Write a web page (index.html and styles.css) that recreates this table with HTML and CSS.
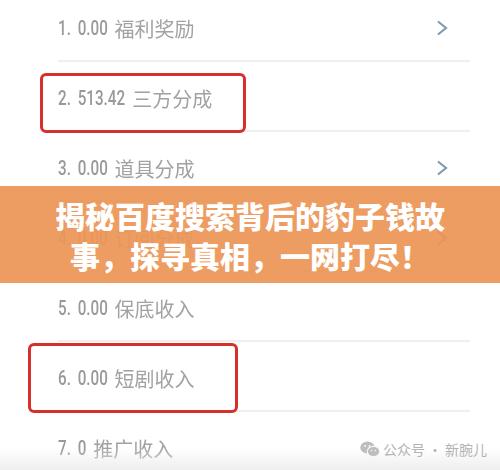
FILE: index.html
```html
<!DOCTYPE html>
<html lang="zh">
<head>
<meta charset="utf-8">
<link rel="stylesheet" href="styles.css">
</head>
<body>
<div class="page">
  <ul class="list">
    <li class="row"><span class="num n7">1. 0.00</span><span class="label">福利奖励</span>
      <svg class="chev" viewBox="0 0 12 16"><polyline points="2,1.5 10,8 2,14.5"/></svg></li>
    <li class="row"><span class="num n9">2. 513.42</span><span class="label">三方分成</span>
      <span class="mark mark-a"></span></li>
    <li class="row"><span class="num n7">3. 0.00</span><span class="label">道具分成</span>
      <svg class="chev" viewBox="0 0 12 16"><polyline points="2,1.5 10,8 2,14.5"/></svg></li>
    <li class="row"><span class="num n7">4. 0.00</span><span class="label">订阅分成</span>
      <svg class="chev" viewBox="0 0 12 16"><polyline points="2,1.5 10,8 2,14.5"/></svg></li>
    <li class="row"><span class="num n7">5. 0.00</span><span class="label">保底收入</span></li>
    <li class="row"><span class="num n7">6. 0.00</span><span class="label">短剧收入</span>
      <span class="mark mark-b"></span></li>
    <li class="row"><span class="num n4">7. 0</span><span class="label">推广收入</span></li>
  </ul>

  <div class="banner">
    <h1 class="title">揭秘百度搜索背后的豹子钱故事，探寻真相，一网打尽！</h1>
  </div>

  <div class="fade"></div>

  <div class="watermark">
    <svg class="wx" viewBox="0 0 20 16">
      <ellipse cx="7.5" cy="6.5" rx="7.2" ry="6" fill="#bdbdbd"/>
      <ellipse cx="13.5" cy="10.5" rx="6.2" ry="5.2" fill="#bdbdbd" stroke="#f6f6f6" stroke-width="1.2"/>
      <circle cx="5" cy="5" r="1" fill="#f6f6f6"/>
      <circle cx="9.6" cy="5" r="1" fill="#f6f6f6"/>
      <circle cx="11.6" cy="9.6" r="0.8" fill="#f6f6f6"/>
      <circle cx="15.4" cy="9.6" r="0.8" fill="#f6f6f6"/>
    </svg>
    <span class="wm-text">公众号<span class="wm-dot">·</span>新腕儿</span>
  </div>
</div>
</body>
</html>
```

FILE: styles.css
```css
* { box-sizing: border-box; }
html, body { margin: 0; padding: 0; background: #ffffff; }

.page {
  position: relative;
  width: 500px;
  height: 470px;
  overflow: hidden;
  background: #ffffff;
  font-family: "Noto Sans CJK SC", "Noto Sans", sans-serif;
}

.list {
  list-style: none;
  margin: -7px 0 0 0;
  padding: 0 30px 0 58px;
  filter: blur(0.4px);
}

.row {
  position: relative;
  display: flex;
  align-items: center;
  height: 69px;
  padding-top: 3px;
  margin-bottom: 1px;
  border-bottom: 2px solid #efefef;
  color: #999999;
}

.num {
  display: inline-block;
  font-family: "Roboto", "Liberation Sans", sans-serif;
  font-weight: 500;
  font-size: 20px;
  word-spacing: 4px;
  transform: scaleX(0.76);
  transform-origin: left center;
  white-space: nowrap;
}
.n7 { margin-right: -9px; }
.n9 { margin-right: -14px; }
.n4 { margin-right: -2px; }

.label {
  font-size: 20px;
  font-weight: 400;
  color: #a2a2a2;
}

.chev {
  margin-left: auto;
  margin-right: 22px;
  width: 12px;
  height: 16px;
  fill: none;
  stroke: #7f9bb3;
  stroke-width: 2.2;
}

.mark {
  position: absolute;
  border: 3px solid #d6302c;
  border-radius: 6px;
}
.mark-a { left: -18px; top: 10px; width: 206px; height: 60px; }
.mark-b { left: -30px; top: 0; width: 210px; height: 70px; }

.banner {
  position: absolute;
  left: 0;
  right: 0;
  top: 186px;
  height: 97px;
  display: flex;
  align-items: center;
  justify-content: center;
  padding: 0 52px;
  background: rgba(236, 148, 86, 0.93);
}

.title {
  margin: 0;
  font-family: "Noto Sans CJK SC", sans-serif;
  font-weight: 900;
  font-size: 30px;
  line-height: 40px;
  color: #ffffff;
  text-align: center;
}

.fade {
  position: absolute;
  left: 0;
  right: 0;
  bottom: 0;
  height: 22px;
  background: linear-gradient(to bottom, rgba(240,240,240,0), rgba(236,236,236,0.9));
}

.watermark {
  position: absolute;
  left: 360px;
  top: 440px;
  display: flex;
  align-items: center;
  gap: 3px;
}
.wx { width: 20px; height: 16px; }
.wm-text {
  font-size: 14px;
  line-height: 18px;
  color: #b3b3b3;
}
.wm-dot { margin: 0 3px; }
```
